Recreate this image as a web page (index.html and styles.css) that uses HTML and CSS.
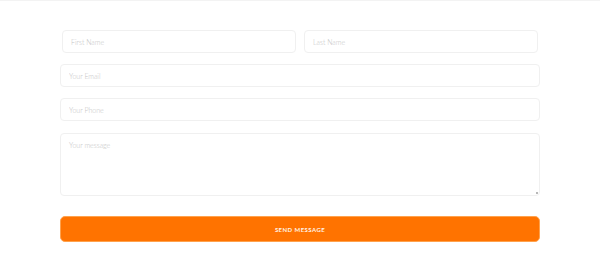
FILE: index.html
```html
<!DOCTYPE html>
<html>
<head>
<meta charset="utf-8">
<link rel="stylesheet" href="styles.css">
</head>
<body>
<div class="topline"></div>
<form class="form">
  <div class="row">
    <input class="field" type="text" placeholder="First Name">
    <input class="field" type="text" placeholder="Last Name">
  </div>
  <input class="field" type="email" placeholder="Your Email">
  <input class="field" type="text" placeholder="Your Phone">
  <div class="area-wrap">
    <textarea class="field area" placeholder="Your message"></textarea>
  </div>
  <button class="send" type="button">Send Message</button>
</form>
</body>
</html>
```
FILE: styles.css
```css
html, body {
  margin: 0;
  padding: 0;
  background: #ffffff;
}
body {
  font-family: Lato, "Open Sans", sans-serif;
}
.topline {
  height: 1px;
  background: #f3f3f3;
}
.form {
  width: 480px;
  margin: 29px auto 0;
  display: flex;
  flex-direction: column;
}
.row {
  display: flex;
  gap: 8px;
  padding: 0 2px 0 2px;
  margin-bottom: 11px;
}
.row .field {
  flex: 1;
  min-width: 0;
  margin-bottom: 0;
}
.field {
  box-sizing: border-box;
  height: 23px;
  border: 1px solid #f0f0f0;
  border-radius: 4px;
  padding: 0 8px;
  margin: 0 0 11px;
  font-family: Lato, sans-serif;
  font-weight: 300;
  font-size: 7px;
  color: #555;
  background: #fff;
  outline: none;
}
.field::placeholder {
  color: #c3c3c3;
}
.area-wrap {
  position: relative;
  display: flex;
  margin: 1px 0 20px;
}
.area {
  flex: 1;
  height: 63px;
  padding: 7px 8px;
  resize: none;
  margin: 0;
}
.area-wrap::after {
  content: "";
  position: absolute;
  right: 2px;
  bottom: 2px;
  width: 2px;
  height: 2px;
  background: #b8b8b8;
}
.send {
  box-sizing: border-box;
  height: 26px;
  border: 1px solid #ffa24d;
  border-radius: 5px;
  background: #ff7300;
  color: #fff4ea;
  font-family: Lato, sans-serif;
  font-weight: 700;
  font-size: 6px;
  letter-spacing: 0.45px;
  text-transform: uppercase;
  padding: 0;
}
```
